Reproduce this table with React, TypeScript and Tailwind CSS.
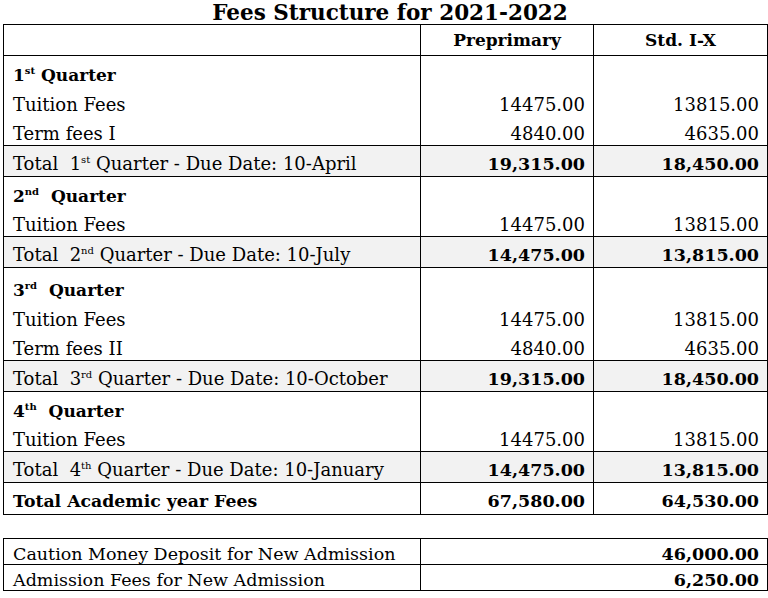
import React from "react";

const font = { fontFamily: '"DejaVu Serif", "Liberation Serif", serif' };

type Row =
  | { kind: "head"; n: string; sup: string; gap?: boolean; h: string }
  | { kind: "item"; label: string; a: string; b: string }
  | { kind: "total"; n: string; sup: string; due: string; a: string; b: string };

const rows: Row[] = [
  { kind: "head", n: "1", sup: "st", h: "h-[30px]" },
  { kind: "item", label: "Tuition Fees", a: "14475.00", b: "13815.00" },
  { kind: "item", label: "Term fees I", a: "4840.00", b: "4635.00" },
  { kind: "total", n: "1", sup: "st", due: "10-April", a: "19,315.00", b: "18,450.00" },
  { kind: "head", n: "2", sup: "nd", gap: true, h: "h-[30px]" },
  { kind: "item", label: "Tuition Fees", a: "14475.00", b: "13815.00" },
  { kind: "total", n: "2", sup: "nd", due: "10-July", a: "14,475.00", b: "13,815.00" },
  { kind: "head", n: "3", sup: "rd", gap: true, h: "h-[33px]" },
  { kind: "item", label: "Tuition Fees", a: "14475.00", b: "13815.00" },
  { kind: "item", label: "Term fees II", a: "4840.00", b: "4635.00" },
  { kind: "total", n: "3", sup: "rd", due: "10-October", a: "19,315.00", b: "18,450.00" },
  { kind: "head", n: "4", sup: "th", gap: true, h: "h-[30px]" },
  { kind: "item", label: "Tuition Fees", a: "14475.00", b: "13815.00" },
  { kind: "total", n: "4", sup: "th", due: "10-January", a: "14,475.00", b: "13,815.00" },
];

const Sup = ({ t }: { t: string }) => (
  <span className="text-[10px] relative -top-[7px] leading-none">{t}</span>
);

export default function App() {
  return (
    <div className="w-[768px] h-[598px] bg-white text-black" style={font}>
      <div className="h-[24px] pt-[1px] text-center text-[21.5px] font-bold leading-[24px] pl-[12px] overflow-visible">
        Fees Structure for 2021-2022
      </div>
      <table className="ml-[3px] w-[764px] border-collapse table-fixed text-[17.5px] leading-[22px]">
        <colgroup>
          <col className="w-[417px]" />
          <col className="w-[173px]" />
          <col className="w-[174px]" />
        </colgroup>
        <tbody>
          <tr className="h-[31px]">
            <td className="border border-black"></td>
            <td className="border border-black text-center font-bold align-bottom pb-[4px] text-[17px]">Preprimary</td>
            <td className="border border-black text-center font-bold align-bottom pb-[4px] text-[17px]">Std. I-X</td>
          </tr>
          {rows.map((r, i) => {
            if (r.kind === "head")
              return (
                <tr key={i} className={r.h}>
                  <td className="border-x border-black pl-[9px] font-bold align-bottom pb-[0px] text-[17px]">
                    {r.n}
                    <Sup t={r.sup} />
                    {r.gap ? "\u00a0 " : " "}Quarter
                  </td>
                  <td className="border-x border-black"></td>
                  <td className="border-x border-black"></td>
                </tr>
              );
            if (r.kind === "item")
              return (
                <tr key={i} className="h-[30px]">
                  <td className="border-x border-black pl-[9px] align-bottom pb-[0px] text-[18px]">{r.label}</td>
                  <td className="border-x border-black text-right pr-[8px] align-bottom pb-[0px] text-[18px]">{r.a}</td>
                  <td className="border-x border-black text-right pr-[8px] align-bottom pb-[0px] text-[18px]">{r.b}</td>
                </tr>
              );
            return (
              <tr key={i} className="h-[31px] bg-[#f2f2f2]">
                <td className="border border-black pl-[9px] align-bottom pb-[1px] whitespace-nowrap text-[18px]">
                  Total&nbsp; {r.n}
                  <Sup t={r.sup} /> Quarter - Due Date: {r.due}
                </td>
                <td className="border border-black text-right pr-[8px] font-bold align-bottom pb-[1px]">{r.a}</td>
                <td className="border border-black text-right pr-[8px] font-bold align-bottom pb-[1px]">{r.b}</td>
              </tr>
            );
          })}
          <tr className="h-[32px]">
            <td className="border border-black pl-[9px] font-bold align-bottom pb-[2px] text-[17.3px]">Total Academic year Fees</td>
            <td className="border border-black text-right pr-[8px] font-bold align-bottom pb-[2px]">67,580.00</td>
            <td className="border border-black text-right pr-[8px] font-bold align-bottom pb-[2px]">64,530.00</td>
          </tr>
        </tbody>
      </table>
      <table className="ml-[3px] mt-[23px] w-[764px] border-collapse table-fixed text-[17.5px] leading-[20px]">
        <colgroup>
          <col className="w-[417px]" />
          <col className="w-[347px]" />
        </colgroup>
        <tbody>
          <tr className="h-[26px]">
            <td className="border border-black pl-[9px] align-bottom whitespace-nowrap">
              Caution Money Deposit for New Admission
            </td>
            <td className="border border-black text-right pr-[8px] font-bold align-bottom">46,000.00</td>
          </tr>
          <tr className="h-[26px]">
            <td className="border border-black pl-[9px] align-bottom whitespace-nowrap">
              Admission Fees for New Admission
            </td>
            <td className="border border-black text-right pr-[8px] font-bold align-bottom">6,250.00</td>
          </tr>
        </tbody>
      </table>
    </div>
  );
}
